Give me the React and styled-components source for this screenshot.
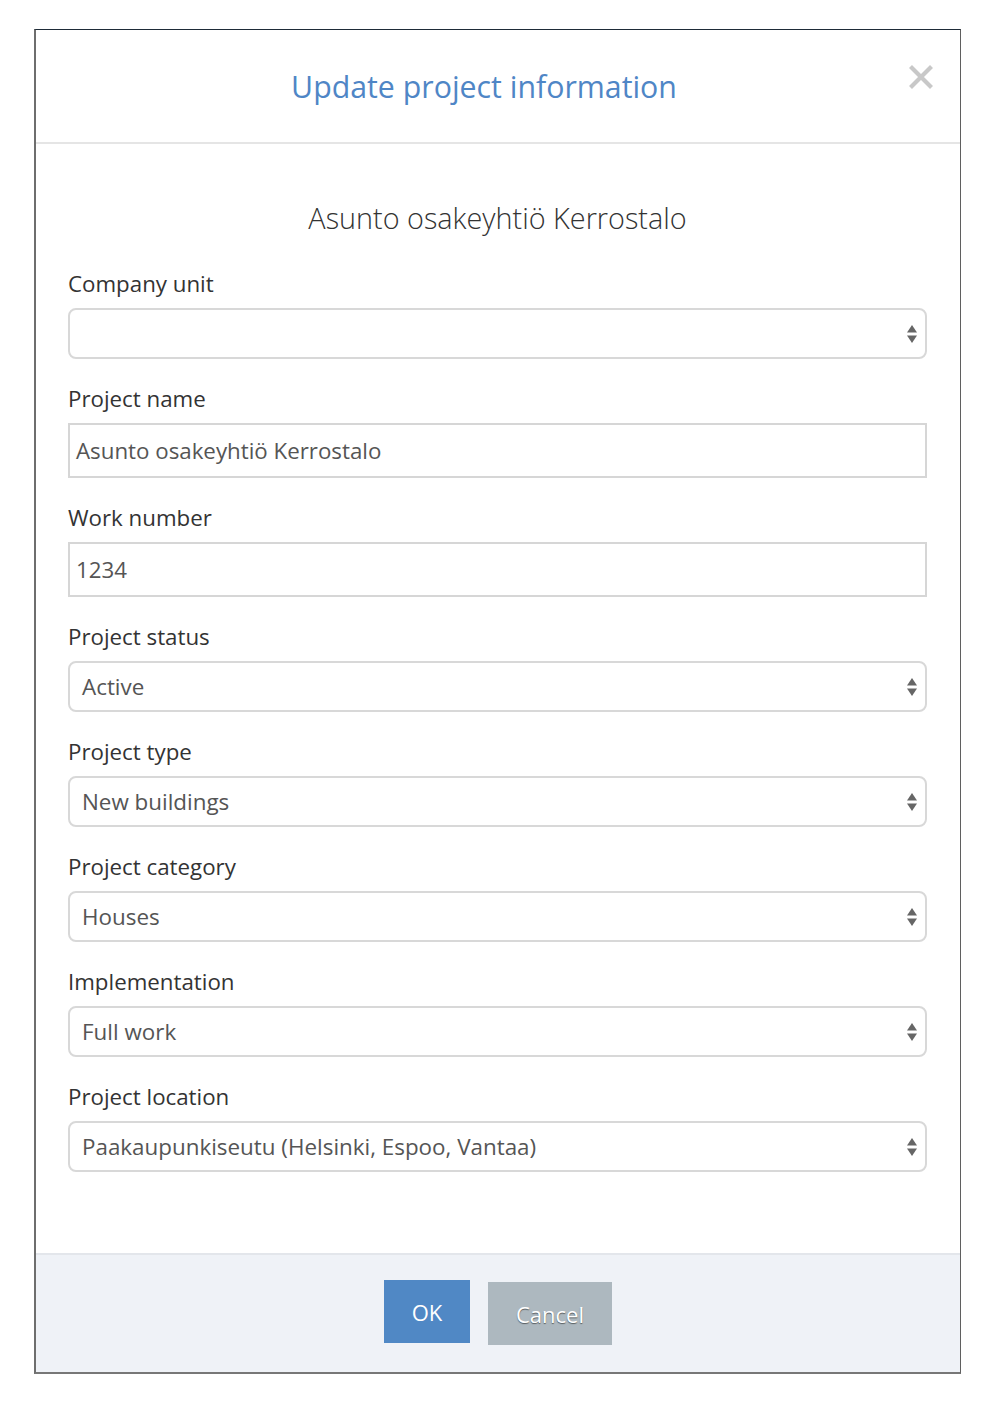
import styled, { createGlobalStyle } from "styled-components";

const GlobalStyle = createGlobalStyle`
  html, body {
    margin: 0;
    padding: 0;
    background: #ffffff;
    font-family: "Open Sans", "Noto Sans", sans-serif;
  }
`;

const fields = [
  { label: "Company unit", kind: "select", value: "" },
  { label: "Project name", kind: "input", value: "Asunto osakeyhtiö Kerrostalo" },
  { label: "Work number", kind: "input", value: "1234" },
  { label: "Project status", kind: "select", value: "Active" },
  { label: "Project type", kind: "select", value: "New buildings" },
  { label: "Project category", kind: "select", value: "Houses" },
  { label: "Implementation", kind: "select", value: "Full work" },
  { label: "Project location", kind: "select", value: "Paakaupunkiseutu (Helsinki, Espoo, Vantaa)" },
];

function SelectArrows() {
  return (
    <svg width="10" height="20" viewBox="0 0 10 20">
      <path d="M5 1 L10 8.5 L0 8.5 Z" fill="#666" />
      <path d="M5 19 L10 11.5 L0 11.5 Z" fill="#666" />
    </svg>
  );
}

function CloseIcon() {
  return (
    <svg width="26" height="26" viewBox="0 0 26 26">
      <path d="M2.5 2.5 L23.5 23.5 M23.5 2.5 L2.5 23.5" stroke="#c8c8c8" strokeWidth="4.2" />
    </svg>
  );
}

export default function App() {
  return (
    <Page>
      <GlobalStyle />
      <Modal>
        <Header>
          <Title>Update project information</Title>
          <Close aria-label="Close">
            <CloseIcon />
          </Close>
        </Header>
        <Body>
          <Subtitle>Asunto osakeyhtiö Kerrostalo</Subtitle>
          {fields.map((f) => (
            <Group key={f.label}>
              <Label>{f.label}</Label>
              {f.kind === "input" ? (
                <TextBox>{f.value}</TextBox>
              ) : (
                <SelectBox>
                  <span>{f.value}</span>
                  <SelectArrows />
                </SelectBox>
              )}
            </Group>
          ))}
        </Body>
        <Footer>
          <OkButton>OK</OkButton>
          <CancelButton>Cancel</CancelButton>
        </Footer>
      </Modal>
    </Page>
  );
}

const Page = styled.div`
  width: 1000px;
  height: 1408px;
  padding-top: 29px;
  box-sizing: border-box;
`;

const Modal = styled.div`
  margin-left: 34px;
  width: 927px;
  box-sizing: border-box;
  border: 1px solid #5f5f5f;
  border-top-color: #1e2b38;
  border-left-width: 2px;
  border-bottom-width: 2px;
  border-left-color: #6e6e6e;
  border-bottom-color: #777777;
  background: #ffffff;
`;

const Header = styled.div`
  position: relative;
  display: flex;
  align-items: center;
  height: 112px;
  padding: 0 26px;
  border-bottom: 2px solid #e5e5e5;
`;

const Title = styled.h4`
  flex: 1;
  margin: 0;
  padding-right: 28px;
  text-align: center;
  font-size: 30.3px;
  font-weight: 400;
  color: #4f86c6;
`;

const Close = styled.span`
  position: absolute;
  top: 34px;
  right: 26px;
  display: flex;
`;

const Body = styled.div`
  padding: 55px 33px 56px 32px;
`;

const Subtitle = styled.div`
  text-align: center;
  font-size: 28.8px;
  font-weight: 300;
  color: #333333;
  line-height: 38px;
  margin-bottom: 32px;
`;

const Group = styled.div`
  display: flex;
  flex-direction: column;
  margin-bottom: 25px;
`;

const Label = styled.label`
  font-size: 22.3px;
  line-height: 30px;
  color: #333333;
  margin-bottom: 9px;
`;

const TextBox = styled.div`
  height: 55px;
  box-sizing: border-box;
  border: 2px solid #d6d6d6;
  padding: 0 6px;
  display: flex;
  align-items: center;
  font-size: 22.3px;
  color: #555555;
`;

const SelectBox = styled.div`
  height: 51px;
  box-sizing: border-box;
  border: 2px solid #d8d8d8;
  border-radius: 8px;
  padding: 0 8px 0 12px;
  display: flex;
  align-items: center;
  justify-content: space-between;
  font-size: 22.4px;
  color: #555555;
`;

const Footer = styled.div`
  display: flex;
  justify-content: center;
  align-items: flex-start;
  gap: 18px;
  padding: 25px 0 27px;
  background: #eff2f7;
  border-top: 2px solid #e3e6eb;
`;

const OkButton = styled.button`
  width: 86px;
  height: 63px;
  border: none;
  background: #5088c5;
  color: #ffffff;
  font-family: "Open Sans", sans-serif;
  font-size: 22px;
`;

const CancelButton = styled.button`
  margin-top: 2px;
  width: 124px;
  height: 63px;
  border: none;
  background: #adb8bf;
  color: #ffffff;
  font-family: "Open Sans", sans-serif;
  font-size: 22px;
  text-shadow: 0 1px 1px rgba(0, 0, 0, 0.5);
`;
